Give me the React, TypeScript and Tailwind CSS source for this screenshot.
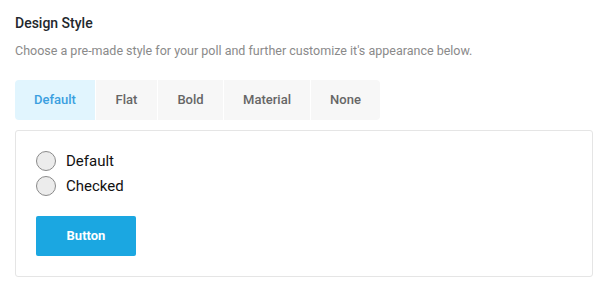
const tabs = [
  { label: 'Default', w: 'w-[80px]' },
  { label: 'Flat', w: 'w-[61px]' },
  { label: 'Bold', w: 'w-[65px]' },
  { label: 'Material', w: 'w-[86px]' },
  { label: 'None', w: 'w-[69px]' },
]

export default function App() {
  return (
    <div className="w-[610px] h-[298px] bg-white px-[15px] pt-[13px] font-['Roboto',sans-serif]">
      <h1 className="text-[14px] leading-[20px] font-medium text-[#23282d]">Design Style</h1>
      <p className="mt-[9px] text-[12.5px] leading-[18px] text-[#8a8a8a]">
        Choose a pre-made style for your poll and further customize it's appearance below.
      </p>
      <div className="mt-[20px] flex gap-px">
        {tabs.map((t, i) => (
          <button
            key={t.label}
            className={`${t.w} h-[40px] flex items-center justify-center text-[13px] font-medium ${
              i === 0 ? 'bg-[#e1f5fe] text-[#3a9fe0] rounded-l-[4px]' : 'bg-[#f7f7f7] text-[#666]'
            } ${i === tabs.length - 1 ? 'rounded-r-[4px]' : ''}`}
          >
            {t.label}
          </button>
        ))}
      </div>
      <div className="mt-[10px] w-[578px] h-[147px] border border-[#e5e5e5] rounded-[3px] pl-[20px] pt-[20px]">
        <div className="flex flex-col gap-[5px]">
          {['Default', 'Checked'].map((l) => (
            <label key={l} className="flex items-center gap-[10px] h-[20px]">
              <span className="w-[20px] h-[20px] rounded-full border border-[#8a8a8a] bg-[#ececec]" />
              <span className="text-[15px] text-[#111]">{l}</span>
            </label>
          ))}
        </div>
        <button className="mt-[20px] w-[100px] h-[40px] rounded-[2px] bg-[#1ba7e1] text-white text-[13px] font-bold">
          Button
        </button>
      </div>
    </div>
  )
}
